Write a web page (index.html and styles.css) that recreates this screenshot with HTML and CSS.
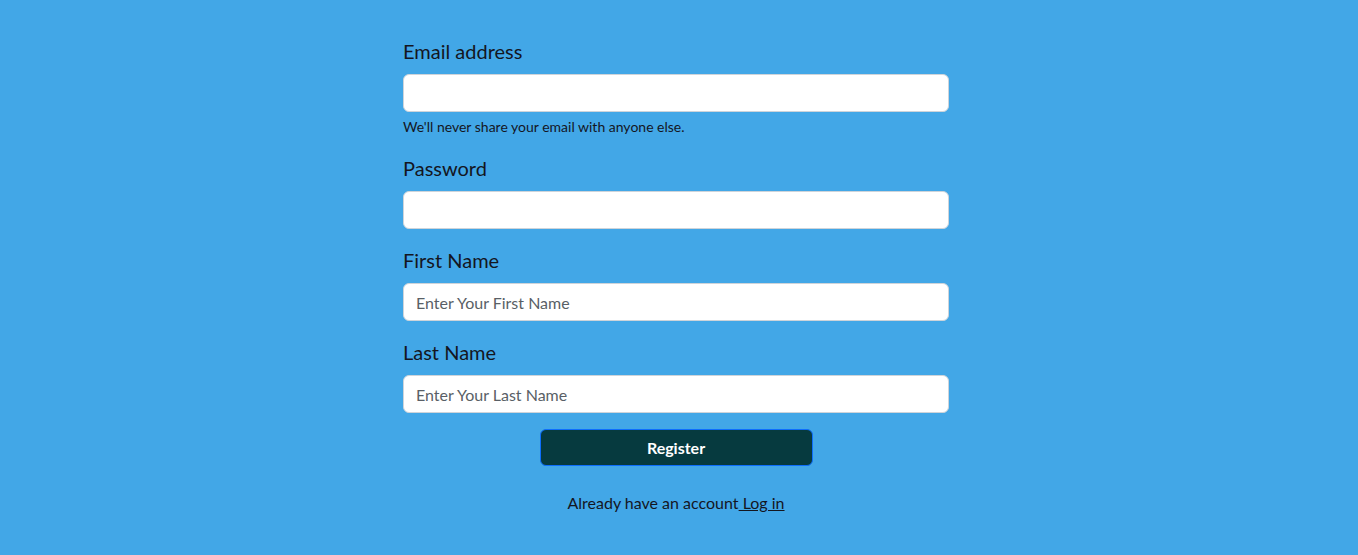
FILE: index.html
```html
<!DOCTYPE html>
<html>
<head>
<meta charset="utf-8">
<link rel="stylesheet" href="styles.css">
</head>
<body>
<main class="page">
  <form class="form">
    <div class="field">
      <label class="label" for="email">Email address</label>
      <input class="input" id="email" type="email">
      <div class="hint">We'll never share your email with anyone else.</div>
    </div>
    <div class="field">
      <label class="label" for="pw">Password</label>
      <input class="input" id="pw" type="password">
    </div>
    <div class="field">
      <label class="label" for="fn">First Name</label>
      <input class="input" id="fn" type="text" placeholder="Enter Your First Name">
    </div>
    <div class="field">
      <label class="label" for="ln">Last Name</label>
      <input class="input" id="ln" type="text" placeholder="Enter Your Last Name">
    </div>
    <div class="actions">
      <button class="btn" type="button">Register</button>
    </div>
    <p class="footer">Already have an account<a class="link" href="#"> Log in</a></p>
  </form>
</main>
</body>
</html>
```
FILE: styles.css
```css
html, body {
  margin: 0;
  padding: 0;
  background: #42a7e7;
  height: 100%;
}
body {
  font-family: "Segoe UI", Lato, "Noto Sans", sans-serif;
  color: #14161f;
  font-size: 16px;
  line-height: 1.5;
}
.page {
  display: flex;
  justify-content: center;
  padding: 36px 6px 0 0;
}
.form {
  width: 546px;
  display: flex;
  flex-direction: column;
}
.field {
  display: flex;
  flex-direction: column;
  margin-bottom: 16px;
}
.label {
  font-size: 20px;
  line-height: 30px;
  margin-bottom: 8px;
}
.input {
  box-sizing: border-box;
  height: 38px;
  border: 1px solid #ced4da;
  border-radius: 6px;
  background: #fff;
  padding: 6px 12px;
  font-family: inherit;
  font-size: 16px;
  color: #212529;
  outline: none;
}
.input::placeholder {
  color: #595f66;
}
.hint {
  margin-top: 4px;
  font-size: 14px;
  line-height: 21px;
  color: #14161f;
}
.actions {
  display: flex;
  justify-content: center;
}
.btn {
  width: 273px;
  height: 37px;
  box-sizing: border-box;
  background: #063a3f;
  border: 1px solid #0d6efd;
  border-radius: 6px;
  color: #fff;
  font-family: inherit;
  font-size: 16px;
  font-weight: 700;
  line-height: 1;
}
.footer {
  margin: 25px 0 0;
  text-align: center;
  font-size: 16px;
  line-height: 24px;
}
.link {
  color: #14161f;
  text-decoration: underline;
}
```
